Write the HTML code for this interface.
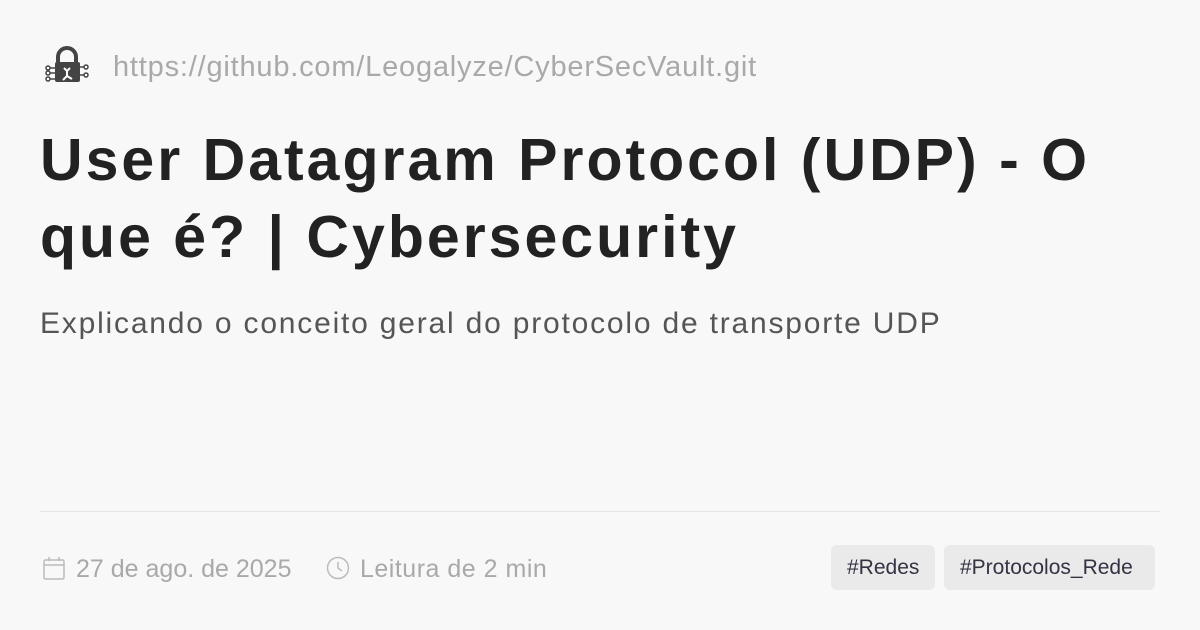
<!DOCTYPE html>
<html><head><meta charset="utf-8"><style>
body{margin:0;width:1200px;height:630px;background:#f9f8f9;font-family:"Liberation Sans",sans-serif;position:relative;overflow:hidden}
.url{position:absolute;left:113px;top:51px;font-size:29px;color:#a9a9a9;letter-spacing:0.8px}
h1{position:absolute;left:40px;top:122px;margin:0;font-size:59px;line-height:77px;font-weight:bold;color:#222;width:1090px;letter-spacing:3px}
.sub{position:absolute;left:40px;top:307px;font-size:30px;color:#555;letter-spacing:1.8px}
.hr{position:absolute;left:40px;top:511px;width:1120px;height:1px;background:#e4e4e4}
.meta{position:absolute;top:555px;font-size:25px;color:#a9a9a9}
.tag{position:absolute;top:545px;height:45px;line-height:45px;background:#eaeaea;border-radius:6px;font-size:21px;color:#334;padding:0 16px}
</style></head><body>
<svg style="position:absolute;left:44px;top:46px" width="46" height="42" viewBox="0 0 46 42">
<path d="M14 16v-5a9 9 0 0 1 18 0v5" fill="none" stroke="#444" stroke-width="4"/>
<rect x="11" y="16" width="25" height="20" rx="2" fill="#444"/>
<g stroke="#444" stroke-width="1.5" fill="#fff"><line x1="4" y1="22" x2="12" y2="22"/><line x1="4" y1="27" x2="12" y2="27"/><line x1="4" y1="33" x2="12" y2="33"/><line x1="35" y1="21" x2="42" y2="21"/><line x1="35" y1="29" x2="42" y2="29"/>
<circle cx="4" cy="22" r="2"/><circle cx="4" cy="27" r="2"/><circle cx="4" cy="33" r="2"/><circle cx="42" cy="21" r="2"/><circle cx="42" cy="29" r="2"/></g>
<path d="M20 22l3 3 3-3M23 25v5l-4 4M23 30l5 3" stroke="#fff" stroke-width="2" fill="none"/>
</svg>
<div class="url">https://github.com/Leogalyze/CyberSecVault.git</div>
<h1>User Datagram Protocol (UDP) - O que é? | Cybersecurity</h1>
<div class="sub">Explicando o conceito geral do protocolo de transporte UDP</div>
<div class="hr"></div>
<svg style="position:absolute;left:43px;top:557px" width="22" height="24" viewBox="0 0 22 24"><rect x="1" y="3" width="20" height="19" rx="1.5" fill="none" stroke="#bbb" stroke-width="1.5"/><line x1="1" y1="8" x2="21" y2="8" stroke="#bbb" stroke-width="1.5"/><line x1="6" y1="0" x2="6" y2="4" stroke="#bbb" stroke-width="1.5"/><line x1="16" y1="0" x2="16" y2="4" stroke="#bbb" stroke-width="1.5"/></svg>
<div class="meta" style="left:76px">27 de ago. de 2025</div>
<svg style="position:absolute;left:326px;top:556px" width="24" height="24" viewBox="0 0 24 24"><circle cx="12" cy="12" r="10.5" fill="none" stroke="#bbb" stroke-width="1.5"/><path d="M12 6v6l4 3" fill="none" stroke="#bbb" stroke-width="1.5"/></svg>
<div class="meta" style="left:360px;letter-spacing:0.5px">Leitura de 2 min</div>
<div class="tag" style="left:831px">#Redes</div>
<div class="tag" style="left:944px;padding:0 22px 0 16px">#Protocolos_Rede</div>
</body></html>
